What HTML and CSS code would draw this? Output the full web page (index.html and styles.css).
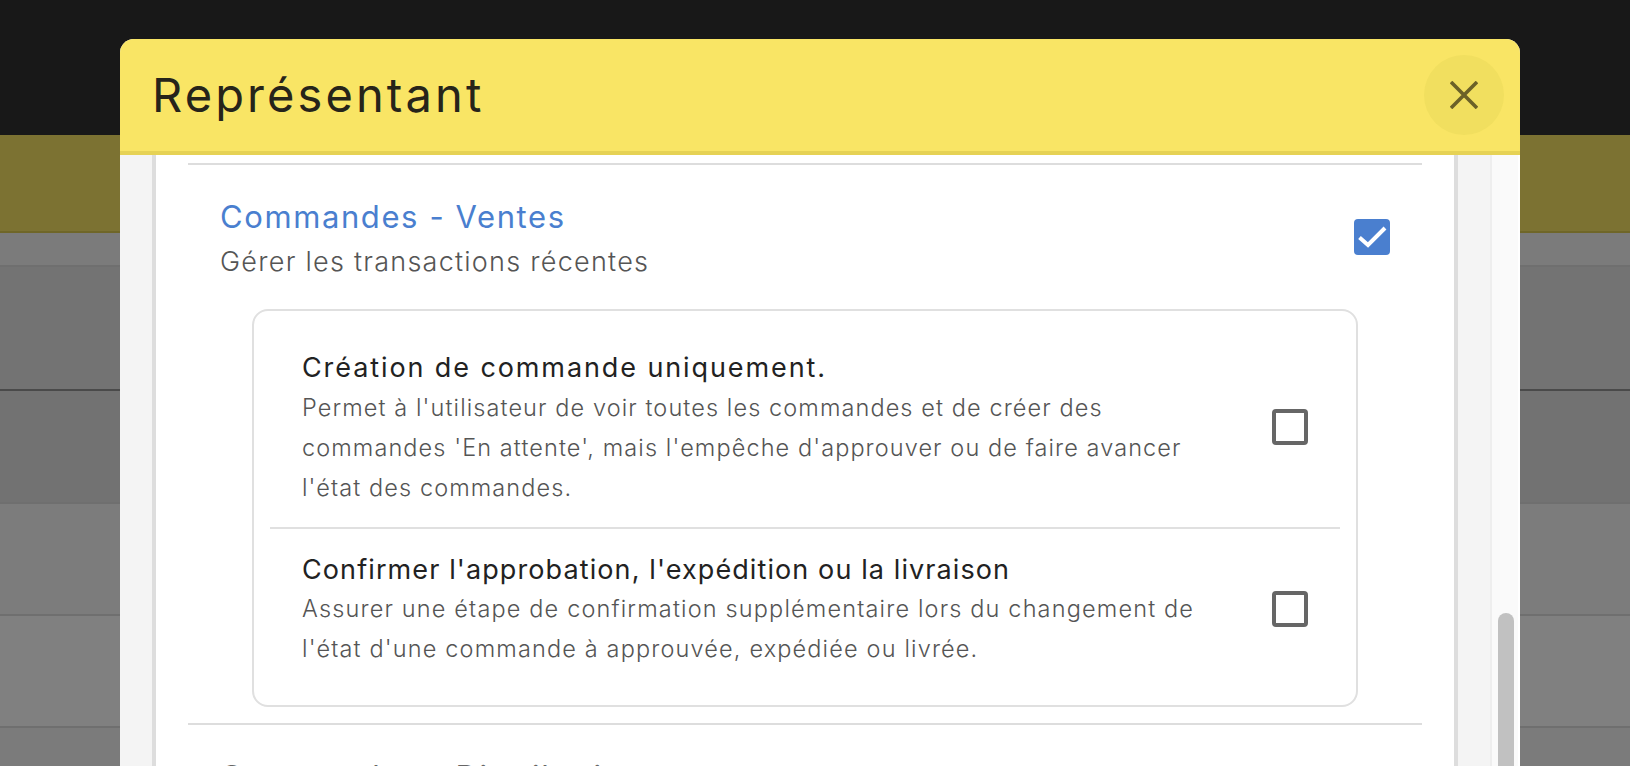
FILE: index.html
```html
<!DOCTYPE html>
<html lang="fr">
<head>
  <meta charset="UTF-8" />
  <title>Représentant</title>
  <link rel="stylesheet" href="styles.css">
</head>
<body>

<div class="page">
  <div class="topbar"></div>
  <div class="subbar"></div>
  <div class="table-head"></div>
  <div class="table-row row-a"></div>
  <div class="table-row row-b"></div>
  <div class="table-row row-c"></div>
  <div class="table-row row-d"></div>
  <div class="table-row row-e"></div>
</div>

<div class="modal">
  <div class="modal-header">
    <h1 class="modal-title">Représentant</h1>
    <button class="close-btn">
      <svg width="28" height="28" viewBox="0 0 28 28"><path d="M1 1L27 27M27 1L1 27" fill="none" stroke="#6b6128" stroke-width="3.6"/></svg>
    </button>
  </div>

  <div class="modal-body">
    <div class="gutter-left"></div>
    <div class="panel">
      <div class="section">
        <div class="section-head">
          <div>
            <div class="section-title">Commandes - Ventes</div>
            <div class="section-sub">Gérer les transactions récentes</div>
          </div>
          <span class="checkbox checked">
            <svg width="36" height="36" viewBox="0 0 36 36"><path d="M5.5 18.5L14 26L31 9" fill="none" stroke="#fff" stroke-width="4"/></svg>
          </span>
        </div>

        <div class="options">
          <div class="option first">
            <div>
              <div class="option-title">Création de commande uniquement.</div>
              <div class="option-desc">Permet à l'utilisateur de voir toutes les commandes et de créer des<br>commandes 'En attente', mais l'empêche d'approuver ou de faire avancer<br>l'état des commandes.</div>
            </div>
            <span class="checkbox"></span>
          </div>
          <div class="option last">
            <div>
              <div class="option-title">Confirmer l'approbation, l'expédition ou la livraison</div>
              <div class="option-desc">Assurer une étape de confirmation supplémentaire lors du changement de<br>l'état d'une commande à approuvée, expédiée ou livrée.</div>
            </div>
            <span class="checkbox"></span>
          </div>
        </div>
      </div>

      <div class="section">
        <div class="section-head">
          <div>
            <div class="section-title plain">Commandes - Distribution</div>
          </div>
        </div>
      </div>
    </div>
    <div class="gutter-right"></div>
    <div class="scroll-track">
      <div class="scroll-thumb"></div>
    </div>
  </div>
</div>

</body>
</html>
```

FILE: styles.css
```css
* {
  box-sizing: border-box;
}

body {
  margin: 0;
  height: 766px;
  overflow: hidden;
  background: #7b7b7b;
  font-family: Inter, "Open Sans", sans-serif;
}

/* dimmed page behind the modal */
.topbar {
  height: 135px;
  background: #181818;
}

.subbar {
  height: 98px;
  background: #7c7232;
  border-bottom: 2px solid #6f6628;
}

.table-head {
  height: 32px;
  background: #7b7b7b;
}

.table-row {
  border-top: 2px solid #6f6f6f;
}

.row-a {
  height: 126px;
  background: #737373;
  border-bottom: 2px solid #4a4a4a;
}

.row-b {
  height: 111px;
  background: #727272;
  border-top: none;
}

.row-c {
  height: 112px;
  background: #7c7c7c;
}

.row-d {
  height: 112px;
  background: #808080;
}

.row-e {
  height: 40px;
  background: #7b7b7b;
}

/* modal */
.modal {
  position: absolute;
  top: 39px;
  left: 120px;
  width: 1400px;
  height: 727px;
  display: flex;
  flex-direction: column;
  border-radius: 14px 14px 0 0;
  overflow: hidden;
  background: #f4f4f4;
}

.modal-header {
  height: 116px;
  flex-shrink: 0;
  display: flex;
  align-items: center;
  justify-content: space-between;
  padding: 0 16px 0 32px;
  background: #f9e565;
  border-bottom: 4px solid #e6d255;
}

.modal-title {
  margin: 0 0 2px;
  font-size: 47px;
  font-weight: 400;
  letter-spacing: 3.1px;
  color: #26241a;
}

.close-btn {
  width: 80px;
  height: 80px;
  display: flex;
  align-items: center;
  justify-content: center;
  padding: 0;
  border: none;
  border-radius: 50%;
  background: #f1df5f;
}

.modal-body {
  flex-grow: 1;
  min-height: 0;
  display: flex;
}

.gutter-left {
  width: 32px;
  background: #f4f4f4;
}

.panel {
  width: 1306px;
  padding: 8px 32px 0;
  background: #fff;
  border-left: 4px solid #ddd;
  border-right: 4px solid #ddd;
  overflow: hidden;
}

.gutter-right {
  width: 34px;
  background: #f4f4f4;
  border-right: 2px solid #eee;
}

.scroll-track {
  flex-grow: 1;
  padding: 458px 4px 0 6px;
  background: #fafafa;
  border-right: 2px solid #fff;
}

.scroll-thumb {
  width: 16px;
  height: 300px;
  background: #c1c1c1;
  border-radius: 8px 8px 0 0;
}

.section {
  border-top: 2px solid #ddd;
  padding: 30px 0 16px;
}

.section-head {
  display: flex;
  align-items: center;
  justify-content: space-between;
  padding: 0 32px;
}

.section-title {
  font-size: 31px;
  line-height: 44px;
  letter-spacing: 1.6px;
  color: #4a7fcf;
}

.section-title.plain {
  color: #666;
}

.section-sub {
  padding-top: 1px;
  font-size: 27px;
  font-weight: 300;
  line-height: 44px;
  letter-spacing: 1.25px;
  color: #555;
}

.checkbox {
  width: 36px;
  height: 36px;
  flex-shrink: 0;
  margin-bottom: 2px;
  border: 4px solid #666;
  border-radius: 4px;
  background: #fff;
}

.checkbox.checked {
  margin-bottom: 5px;
  border: none;
  background: #4a7fcf;
}

.options {
  margin: 25px 64px 0;
  padding: 0 16px;
  border: 2px solid #e0e0e0;
  border-radius: 16px;
}

.option {
  display: flex;
  align-items: center;
  justify-content: space-between;
  padding-left: 32px;
  padding-right: 32px;
}

.option.first {
  padding-top: 37px;
  padding-bottom: 19px;
  border-bottom: 2px solid #e0e0e0;
}

.option.last {
  padding-top: 21px;
  padding-bottom: 36px;
}

.option-title {
  font-size: 27px;
  line-height: 39px;
  letter-spacing: 1.9px;
  color: #222;
}

.option.last .option-title {
  letter-spacing: 1.1px;
}

.option-desc {
  font-size: 23.5px;
  font-weight: 300;
  line-height: 40px;
  letter-spacing: 1.09px;
  color: #555;
  white-space: nowrap;
}

.option.first .option-desc {
  margin-top: 1px;
}

.option.last .option-desc {
  letter-spacing: 1.15px;
}
```
